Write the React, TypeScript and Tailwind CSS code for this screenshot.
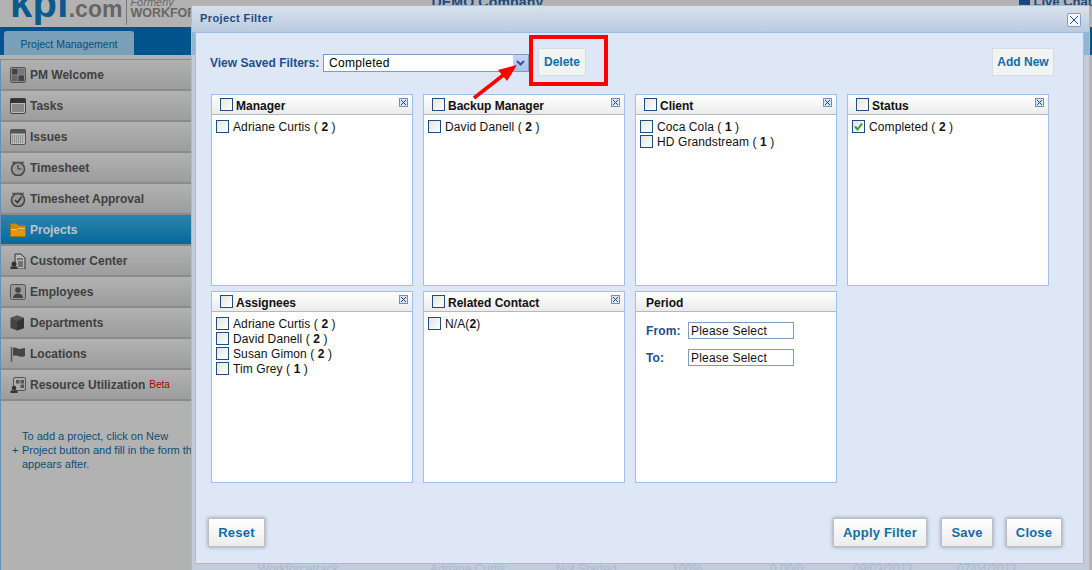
import { ReactNode } from "react";

const font = "font-['Liberation_Sans',Arial,sans-serif]";

const Check = ({ checked = false }: { checked?: boolean }) => (
  <span className="w-[13px] h-[13px] shrink-0 border border-[#1f4e7e] bg-gradient-to-br from-[#e4e4e0] to-white flex items-center justify-center">
    {checked && (
      <svg width="11" height="11" viewBox="0 0 11 11">
        <path d="M2 5.500 L4.500 8.500 L9 2.500" fill="none" stroke="#2fa02f" strokeWidth="2" />
      </svg>
    )}
  </span>
);

const navIcons: Record<string, ReactNode> = {
  "PM Welcome": (
    <>
      <rect x="0.500" y="0.500" width="15" height="15" rx="1.500" fill="#8a8a8a" stroke="#555" />
      <rect x="2" y="2" width="5.500" height="5.500" fill="#444" />
      <rect x="8.500" y="2" width="5.500" height="5.500" fill="#777" />
      <rect x="2" y="8.500" width="5.500" height="5.500" fill="#666" />
      <rect x="8.500" y="8.500" width="5.500" height="5.500" fill="#444" />
    </>
  ),
  Tasks: (
    <>
      <rect x="0.500" y="0.500" width="15" height="15" rx="1.500" fill="#bbb" stroke="#444" />
      <rect x="0.500" y="0.500" width="15" height="4.500" fill="#333" />
      <path d="M2 7h12M2 9h12M2 11h12M2 13h12" stroke="#555" />
    </>
  ),
  Issues: (
    <>
      <rect x="0.500" y="0.500" width="15" height="15" rx="1.500" fill="#bbb" stroke="#555" />
      <rect x="0.500" y="0.500" width="15" height="4" fill="#555" />
      <path d="M2 7h12M2 9h12M2 11h12M2 13h12" stroke="#666" strokeDasharray="1 1" />
    </>
  ),
  Timesheet: (
    <>
      <circle cx="8" cy="9" r="6.500" fill="#999" stroke="#444" strokeWidth="1.500" />
      <path d="M8 5v4h3.500" fill="none" stroke="#333" />
      <path d="M2 2.500h12" stroke="#555" strokeWidth="1.500" />
    </>
  ),
  "Timesheet Approval": (
    <>
      <circle cx="8" cy="9" r="6.500" fill="#999" stroke="#444" strokeWidth="1.500" />
      <path d="M5 9l2.500 2.500L11.500 6" fill="none" stroke="#333" strokeWidth="1.500" />
      <path d="M2 2.500h12" stroke="#555" strokeWidth="1.500" />
    </>
  ),
  Projects: (
    <>
      <path d="M0.500 1.500h6l2 2h7v11h-15z" fill="#c98a10" stroke="#a87408" />
      <path d="M1 8h14v6H1z" fill="#d49a18" />
      <path d="M8 6.500h7M1 7.500h6" stroke="#eecb70" />
    </>
  ),
  "Customer Center": (
    <>
      <path d="M5 1h6l4 4v11H5z" fill="#b5b5b5" stroke="#333" />
      <path d="M7 6h6M8 9h5M8 11h5M8 13h5" stroke="#333" />
      <circle cx="4" cy="11" r="2.500" fill="#333" />
      <path d="M0.500 16.500v-3h7v3z" fill="#333" />
    </>
  ),
  Employees: (
    <>
      <rect x="0.500" y="0.500" width="15" height="15" rx="2" fill="#999" stroke="#555" />
      <circle cx="8" cy="6" r="2.800" fill="#444" />
      <path d="M3 14c0-3 2-4.500 5-4.500s5 1.500 5 4.500z" fill="#444" />
    </>
  ),
  Departments: (
    <>
      <path d="M7 0.500l7 2.500v10L7 15.500 0.500 13V3z" fill="#444" />
      <path d="M7 6v9.500L14 13V3z" fill="#333" />
      <path d="M0.500 3L7 6l7-3L7 0.500z" fill="#555" />
    </>
  ),
  Locations: (
    <>
      <path d="M1.500 1v15" stroke="#555" strokeWidth="1.500" />
      <path d="M3 2c3-1.500 4 1 6.500 1S13 2 15 2v8c-2 1-3.500 1-5.500 .5S5 9 3 10z" fill="#444" />
    </>
  ),
  "Resource Utilization": (
    <>
      <rect x="3.500" y="0.500" width="12" height="13" rx="1.500" fill="#aaa" stroke="#555" />
      <path d="M6 3h3.500v3.500H6zM10.500 3H14v3.500h-3.500zM10.500 7.500H14V11h-3.500z" fill="#555" />
      <circle cx="4" cy="11" r="2.300" fill="#333" />
      <path d="M0.500 16v-2.500h7V16z" fill="#333" />
    </>
  ),
};

const navItems = Object.keys(navIcons);

const NavItem = ({ label }: { label: string }) => {
  const active = label === "Projects";
  return (
    <div
      className={`h-[31px] flex items-center pl-[9px] gap-[4px] border-b-2 border-[#8b8b8b] ${
        active
          ? "bg-gradient-to-b from-[#2a84ad] to-[#03699c] text-[#b9c7cf]"
          : "bg-gradient-to-b from-[#b2b2b2] to-[#9d9d9d] text-[#404040]"
      }`}
    >
      <svg width="16" height="16" viewBox="0 0 16 16" className="shrink-0">
        {navIcons[label]}
      </svg>
      <span className="text-[12px] font-bold whitespace-nowrap">{label}</span>
      {label === "Resource Utilization" && (
        <span className="text-[10px] text-[#b00000]">Beta</span>
      )}
    </div>
  );
};

const CloseBox = () => (
  <span className="w-[9px] h-[9px] border border-[#6f8fc0] bg-[#dbe6f8] flex items-center justify-center">
    <svg width="7" height="7" viewBox="0 0 7 7">
      <path d="M1 1l5 5M6 1L1 6" stroke="#24406f" />
    </svg>
  </span>
);

const Panel = ({ title, items, closable = true, noCheck = false, children }: {
  title: string;
  items?: ReactNode[];
  closable?: boolean;
  noCheck?: boolean;
  children?: ReactNode;
}) => (
  <div className="h-[192px] bg-white border border-[#9fc0ea] flex flex-col">
    <div className="h-[20px] shrink-0 flex items-center pl-2 pr-[4px] border-b border-[#b4b9c0] bg-gradient-to-b from-white to-[#ebebeb]">
      {!noCheck && <Check />}
      <span className={`mt-[2px] text-[12px] font-bold text-[#111] ${noCheck ? "ml-[2px]" : "ml-[3px]"}`}>{title}</span>
      {closable && <span className="ml-auto -mt-[4px]"><CloseBox /></span>}
    </div>
    <div className="pl-[4px] pt-[4px] flex flex-col text-[12px] text-[#111] tracking-[0.1px]">
      {items?.map((it, i) => <div key={i} className="h-[15px] flex items-center">{it}</div>)}
      {children}
    </div>
  </div>
);

const Opt = ({ name, n, checked }: { name: string; n: number; checked?: boolean }) => (
  <>
    <Check checked={checked} />
    <span className="ml-[4px] whitespace-nowrap">{name} ( <b>{n}</b> )</span>
  </>
);

const Btn = ({ label, w }: { label: string; w: string }) => (
  <button className={`${w} h-[29px] pt-[1px] bg-gradient-to-b from-white to-[#ececec] border border-[#bdbdbd] shadow-[0_0_4px_#8e96a3] text-[13px] font-bold text-[#0f6ea8] tracking-[0.2px]`}>
    {label}
  </button>
);

const FlatBtn = ({ label, w }: { label: string; w: string }) => (
  <button className={`${w} h-[28px] bg-[#f2f3f3] border border-[#d8dce2] text-[12px] font-bold text-[#0f6ea8]`}>
    {label}
  </button>
);

const DateRow = ({ label }: { label: string }) => (
  <div className="flex items-center h-[17px]">
    <span className="w-[42px] text-[12px] font-bold text-[#1f4e8c]">{label}</span>
    <span className="w-[106px] h-[17px] border border-[#7f9db9] bg-white pl-[2px] text-[12px] leading-[16px] tracking-[0.2px]">Please Select</span>
  </div>
);

const ghostCells = [
  ["left-[258px]", "Workforcetrack"],
  ["left-[430px]", "Adriane Curtis"],
  ["left-[556px]", "Not Started"],
  ["left-[672px]", "100%"],
  ["left-[770px]", "0.00/0"],
  ["left-[853px]", "09/03/2012"],
  ["left-[957px]", "07/04/2012"],
];

const App = () => (
  <div className={`${font} relative w-[1092px] h-[570px] overflow-hidden bg-[#b2b2b2]`}>
    <div className="h-[27px] flex items-start overflow-hidden">
      <span className="flex items-baseline pl-[10px] -mt-[17px] leading-[40px] font-bold">
        <span className="text-[40px] text-[#0a5a8e] tracking-[0.3px]">kpi</span>
        <span className="text-[23px] text-[#666]">.com</span>
      </span>
      <span className="ml-[4px] h-[25px] border-l border-[#777] pl-[3px] text-[#666] shrink-0">
        <span className="block italic text-[11px] leading-[5px]">Formerly</span>
        <span className="block text-[12.500px] font-bold leading-[14px] mt-[1px] whitespace-nowrap">WORKFORCETRACK</span>
      </span>
      <span className="ml-[174px] -mt-[8px] text-[14px] font-bold text-[#1a4a7a] whitespace-nowrap tracking-[0.2px]">DEMO Company</span>
      <span className="ml-[475px] -mt-[8px] flex items-center gap-[4px] text-[13px] font-bold text-[#1a4a7a] whitespace-nowrap">
        <span className="w-[11px] h-[11px] bg-[#1a4a7a]" />
        Live Chat
      </span>
    </div>
    <div className="h-[28px] bg-[#00548c] pl-[4px] flex items-end">
      <div className="w-[130px] h-[24px] rounded-t-[3px] bg-[#7a9fb8] text-[#00507f] text-[10.500px] leading-[26px] text-center">Project Management</div>
    </div>
    <div className="mt-[4px] w-[191px] border-l border-t border-[#6a8fb5] h-[511px]">
      {navItems.map((l) => <NavItem key={l} label={l} />)}
      <div className="relative pl-[21px] pt-[28px] text-[11px] leading-[14px] text-[#0e4d78] whitespace-nowrap overflow-hidden">
        <span className="absolute left-[11px] top-[42px]">+</span>
        To add a project, click on New<br />Project button and fill in the form that<br />appears after.
      </div>
    </div>

    {ghostCells.map(([pos, text]) => (
      <span key={text} className={`absolute top-[560px] text-[12px] text-[#5a6675] ${pos}`}>{text}</span>
    ))}

    {/* modal, runs off the bottom of the page */}
    <div className="absolute left-[191px] top-[5px] w-[899px] h-[566px] border border-[#9dbde6] bg-[#c6d6ea]/75 flex flex-col">
      <div className="h-[26px] shrink-0 flex items-center pl-[8px] pr-[8px] text-[11px] font-bold text-[#1f4a80] tracking-[0.4px] bg-gradient-to-b from-[#dbe4f0]/90 to-[#b9cbe0]">
        <span className="-mt-[1px]">Project Filter</span>
        <span className="ml-auto mt-[2px] w-[14px] h-[14px] border border-[#7f9fd0] rounded-[2px] bg-[#f4f7fd] flex items-center justify-center">
          <svg width="10" height="10" viewBox="0 0 10 10"><path d="M1 1l8 8M9 1L1 9" stroke="#2a4a90" /></svg>
        </span>
      </div>
      <div className="h-[532px] shrink-0 ml-[3px] mr-[5px] border border-[#9dbde6] bg-[#dee7f6] px-[15px] relative">
        <div className="h-[61px] flex items-start pt-[15px]">
          <span className="text-[12px] font-bold text-[#1f4e8c] mt-[6px] -ml-[1px] w-[113px] whitespace-nowrap">View Saved Filters:</span>
          <div className="w-[206px] h-[18px] mt-[6px] border border-[#7f9db9] bg-white flex items-center pl-[5px] text-[12px] tracking-[0.3px] relative">
            Completed
            <span className="absolute right-0 top-0 w-[15px] h-[16px] bg-gradient-to-b from-[#c5d6f7] to-[#a9c0ef] flex items-center justify-center">
              <svg width="9" height="7" viewBox="0 0 9 7"><path d="M1 1l3.500 3.500L8 1" fill="none" stroke="#3d5480" strokeWidth="2" /></svg>
            </span>
          </div>
          <div className="ml-[9px]"><FlatBtn label="Delete" w="w-[48px]" /></div>
          <div className="ml-auto mr-[14px]"><FlatBtn label="Add New" w="w-[62px]" /></div>
        </div>
        <div className="grid grid-cols-[202px_202px_202px_202px] gap-x-[10px] gap-y-[5px]">
          <Panel title="Manager" items={[<Opt name="Adriane Curtis" n={2} />]} />
          <Panel title="Backup Manager" items={[<Opt name="David Danell" n={2} />]} />
          <Panel title="Client" items={[<Opt name="Coca Cola" n={1} />, <Opt name="HD Grandstream" n={1} />]} />
          <Panel title="Status" items={[<Opt name="Completed" n={2} checked />]} />
          <Panel title="Assignees" items={[
            <Opt name="Adriane Curtis" n={2} />,
            <Opt name="David Danell" n={2} />,
            <Opt name="Susan Gimon" n={2} />,
            <Opt name="Tim Grey" n={1} />,
          ]} />
          <Panel title="Related Contact" items={[
            <><Check /><span className="ml-[4px]">N/A(<b>2</b>)</span></>,
          ]} />
          <Panel title="Period" noCheck closable={false}>
            <div className="pl-[6px] pt-[6px] flex flex-col gap-[10px]">
              <DateRow label="From:" />
              <DateRow label="To:" />
            </div>
          </Panel>
        </div>
        <div className="absolute left-[12px] right-[21px] bottom-[16px] flex items-center">
          <Btn label="Reset" w="w-[57px]" />
          <span className="ml-auto mr-[14px]"><Btn label="Apply Filter" w="w-[94px]" /></span>
          <span className="mr-[13px]"><Btn label="Save" w="w-[52px]" /></span>
          <Btn label="Close" w="w-[56px]" />
        </div>
      </div>
    </div>

    {/* annotation */}
    <div className="absolute left-[529px] top-[35px] w-[79px] h-[51px] border-[4px] border-[#ff0000]" />
    <svg className="absolute left-[470px] top-[60px]" width="50" height="42" viewBox="0 0 50 42">
      <path d="M4 38L36 13" stroke="#ff0000" strokeWidth="3.500" />
      <path d="M47 5L28 10L37 21z" fill="#ff0000" />
    </svg>
  </div>
);

export default App;
